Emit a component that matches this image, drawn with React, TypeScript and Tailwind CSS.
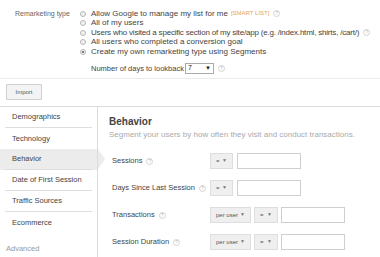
import React from "react";

function Help() {
  return (
    <span className="ml-[4px] inline-flex h-[7px] w-[7px] shrink-0 items-center justify-center rounded-full border border-[#d4d4d4] text-[5px] leading-none tracking-normal text-[#bbb]">
      ?
    </span>
  );
}

function Radio({ checked, label }: { checked?: boolean; label: React.ReactNode }) {
  return (
    <div className="flex h-[9.5px] items-center">
      <span className="mr-[5px] flex h-[6px] w-[6px] shrink-0 items-center justify-center rounded-full border border-[#b5b5b5] bg-[#f3f3f3]">
        {checked && <span className="h-[2px] w-[2px] rounded-full bg-[#555]" />}
      </span>
      <span className="flex items-center whitespace-nowrap">{label}</span>
    </div>
  );
}

function Drop({ label, w }: { label: string; w: string }) {
  return (
    <div className={`flex h-[16px] items-center justify-between border border-[#dedede] bg-[#efefef] px-[5px] text-[6px] text-[#555] ${w}`}>
      <span>{label}</span>
      <span className="text-[5px] text-[#777]">▼</span>
    </div>
  );
}

function Input() {
  return <div className="h-[16px] w-[64px] border border-[#cfcfcf] bg-white" />;
}

function Row({ label, perUser }: { label: string; perUser?: boolean }) {
  return (
    <div className="flex h-[16px] items-center">
      <div className="flex w-[98px] shrink-0 items-center whitespace-nowrap text-[7.5px]">
        {label}
        <Help />
      </div>
      {perUser && (
        <div className="mr-[3px]">
          <Drop label="per user" w="w-[41px]" />
        </div>
      )}
      <Drop label="=" w={perUser ? "w-[24px]" : "w-[23px]"} />
      <div className={perUser ? "ml-[3px]" : "ml-[4px]"}>
        <Input />
      </div>
    </div>
  );
}

const sideItems = ["Demographics", "Technology", "Behavior", "Date of First Session", "Traffic Sources", "Ecommerce"];

export default function App() {
  return (
    <div className="h-[257px] w-[380px] overflow-hidden bg-white text-[8px] text-[#444]" style={{ fontFamily: '"Liberation Sans", Arial, sans-serif' }}>
      {/* Remarketing type */}
      <div className="flex h-[79px] border-b border-[#ececec] pt-[9px]">
        <div className="w-[80px] shrink-0 whitespace-nowrap pl-[15px] text-[7px] leading-[9.5px] text-[#666]">Remarketing type</div>
        <div className="flex flex-col">
          <Radio
            label={
              <>
                Allow Google to manage my list for me
                <span className="ml-[3px] text-[6px] text-[#e8a35a]">[SMART LIST]</span>
                <Help />
              </>
            }
          />
          <Radio label="All of my users" />
          <Radio
            label={
              <span className="flex items-center tracking-[-0.2px]">
                Users who visited a specific section of my site/app (e.g. /index.html, shirts, /cart/)
                <Help />
              </span>
            }
          />
          <Radio label="All users who completed a conversion goal" />
          <Radio checked label="Create my own remarketing type using Segments" />
          <div className="mt-[6px] flex items-center pl-[11px]">
            <span className="whitespace-nowrap text-[7.5px]">Number of days to lookback</span>
            <div className="ml-[1px] flex h-[11px] w-[29px] items-center justify-between border border-[#aaa] bg-white px-[2px] text-[7px] text-[#222]">
              <span>7</span>
              <span className="text-[6px]">▼</span>
            </div>
            <Help />
          </div>
        </div>
      </div>

      {/* Import */}
      <div className="h-[28px] border-b border-[#dcdcdc] pl-[6px] pt-[5px]">
        <button className="flex h-[16px] w-[36px] items-center justify-center rounded-[1px] border border-[#d0d0d0] bg-[#f3f3f3] text-[6px] text-[#555]">
          Import
        </button>
      </div>

      <div className="flex">
        {/* Sidebar */}
        <div className="w-[98px] shrink-0 border-r border-[#dcdcdc] text-[7.5px]">
          {sideItems.map((item, i) => (
            <div key={item} className={`relative h-[21px] ${item === "Behavior" ? "bg-[#ececec]" : ""}`}>
              <div className={`mx-[5px] flex h-full items-center pl-[7px] ${i < sideItems.length - 1 && item !== "Technology" ? "border-b border-[#dedede]" : ""}`}>
                {item}
              </div>
              {item === "Behavior" && (
                <span className="absolute right-[-8px] top-0 z-10 h-0 w-0 border-y-[10.5px] border-l-[7px] border-y-transparent border-l-[#ececec]" />
              )}
            </div>
          ))}
          <div className="mx-[5px] mt-[6px] flex h-[20px] items-center border-b border-[#dedede] pl-[1px] text-[#999]">Advanced</div>
        </div>

        {/* Main */}
        <div className="flex-1 pl-[11px] pt-[9px]">
          <div className="text-[10px] font-bold leading-[12px] text-[#444]">Behavior</div>
          <div className="mt-[1px] whitespace-nowrap leading-[12px] text-[#aaa]">Segment your users by how often they visit and conduct transactions.</div>
          <div className="mt-[12px] flex flex-col gap-[11px] pl-[3px]">
            <Row label="Sessions" />
            <Row label="Days Since Last Session" />
            <Row label="Transactions" perUser />
            <Row label="Session Duration" perUser />
          </div>
        </div>
      </div>
    </div>
  );
}
